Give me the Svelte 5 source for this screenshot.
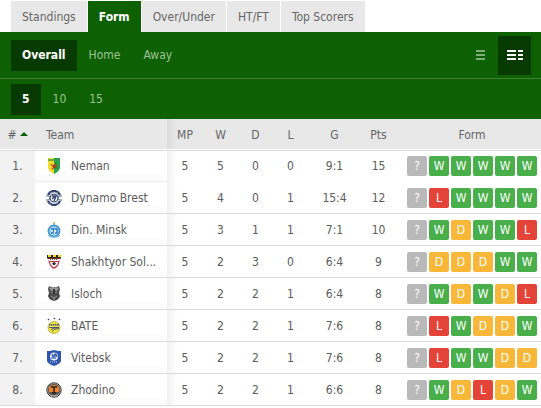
<script>
  const tabs = ['Standings', 'Form', 'Over/Under', 'HT/FT', 'Top Scorers'];
  const venues = ['Overall', 'Home', 'Away'];
  const counts = ['5', '10', '15'];
  let tab = $state('Form');
  let venue = $state('Overall');
  let count = $state('5');
  let wide = $state(true);

  const rows = [
    { team: 'Neman', stats: ['5', '5', '0', '0', '9:1', '15'], form: '?WWWWW' },
    { team: 'Dynamo Brest', stats: ['5', '4', '0', '1', '15:4', '12'], form: '?LWWWW' },
    { team: 'Din. Minsk', stats: ['5', '3', '1', '1', '7:1', '10'], form: '?WDWWL' },
    { team: 'Shakhtyor Sol...', stats: ['5', '2', '3', '0', '6:4', '9'], form: '?DDDWW' },
    { team: 'Isloch', stats: ['5', '2', '2', '1', '6:4', '8'], form: '?WDWDL' },
    { team: 'BATE', stats: ['5', '2', '2', '1', '7:6', '8'], form: '?LWDDW' },
    { team: 'Vitebsk', stats: ['5', '2', '2', '1', '7:6', '8'], form: '?LWWDD' },
    { team: 'Zhodino', stats: ['5', '2', '2', '1', '6:6', '8'], form: '?WDLDW' }
  ];
  const kinds = { '?': 'next', W: 'win', D: 'draw', L: 'loss' };
</script>

{#snippet crest(i)}
  <svg class="crest" viewBox="0 0 16 16" width="16" height="16" aria-hidden="true">
    {#if i === 0}
      <path d="M2 0h6v16Q2 13 2 9z" fill="#f3dc2c" />
      <path d="M8 0h6v9q0 4-6 7z" fill="#20a34c" />
      <path d="M2 1h12v2H2z" fill="#3f9a45" opacity=".75" />
      <path d="M4 6l4 1 2-2 1 2-1 2 2 2-3-1-4 2 2-3z" fill="#a5461c" />
    {:else if i === 1}
      <circle cx="8" cy="8" r="4" fill="#fff" stroke="#34466f" />
      <path d="M2 5Q4 1 8 1t6 4M2 11q2 4 6 4t6-4" fill="none" stroke="#34466f" stroke-width="2.4" />
      <path d="M4 3l8 0M4 13l8 0" stroke="#a9b4ce" stroke-width=".7" />
      <path d="M0 6h3l1 2-1 2H0M16 6h-3l-1 2 1 2h3" fill="none" stroke="#536489" />
      <path d="M6 6h4L8 11M6 9l3-3" fill="none" stroke="#34466f" stroke-width="1.5" />
    {:else if i === 2}
      <path d="M8 0l1 2H7z" fill="#9dca70" stroke="#9dca70" />
      <circle cx="8" cy="9" r="5.5" fill="#eaf6ff" stroke="#388fd4" stroke-width="1.8" />
      <circle cx="8" cy="9" r="3.4" fill="none" stroke="#74b7e8" />
      <path d="M5 7h3l-1 4H5m4-4h2v4H9" fill="none" stroke="#2379c4" stroke-width="1.3" />
      <path d="M2 13l2 2h8l2-2" fill="none" stroke="#74b7e8" />
    {:else if i === 3}
      <path d="M1 1h14l-2 8q-1 4-5 6-4-2-5-6z" fill="#c93542" />
      <path d="M1 1h14v3.500H1z" fill="#292622" />
      <path d="M2 1h3v2H2zm5 0h3v2H7zm5 0h3v2h-3z" fill="#f5d428" />
      <path d="M2 5h12l-1 2H3zM4 8h8l-1 3-3 2.500-3-2.500z" fill="#fff" />
      <path d="M4 5.500h8" stroke="#666" stroke-dasharray="1 1" />
      <path d="M8 8l2 1-1 2H7L6 9z" fill="#333" />
    {:else if i === 4}
      <path d="M3 0l2 1h6l2-1 1 3-1 4 1 3q-1 4-6 5-5-1-6-5l1-3-1-4z" fill="#4a4a4a" />
      <path d="M3 2q5-2 10 0l-2 3H5z" fill="#969696" />
      <path d="M5 6l2 1m2 0l2-1M5 10l3 2 3-2M7 13h2" fill="none" stroke="#999" />
      <path d="M8 3v5" stroke="#303030" stroke-width="2" />
    {:else if i === 5}
      <path d="M2 1h1v1H2zm6-1h1v1H8zm5 1h1v1h-1z" fill="#2c3a96" stroke="#2c3a96" stroke-width=".5" />
      <circle cx="8" cy="9.5" r="6" fill="#f5e42e" stroke="#a8a348" stroke-width=".8" />
      <path d="M3 6h10v1.500H3z" fill="#4656a0" />
      <path d="M3 9.500h10M5 11.500q3-2 8-2M6 13.500q2-3 7-3" fill="none" stroke="#3a4a94" stroke-width=".9" />
      <path d="M4 6.800h8" stroke="#f5e42e" stroke-width=".8" stroke-dasharray="1 1" />
    {:else if i === 6}
      <path d="M1 1l3 0 4-1 4 1h3v10q-1 3-7 5-6-2-7-5z" fill="#2e55ae" />
      <circle cx="8" cy="6.5" r="4" fill="#e8f0ff" />
      <path d="M6 4l1 3 2-3v5M5 8h3M10 4l1 3" fill="none" stroke="#2e55ae" stroke-width="1.2" />
      <path d="M4 12h8" stroke="#d2def5" stroke-dasharray="1 1" />
    {:else}
      <circle cx="8" cy="8" r="7.2" fill="#5b5652" stroke="#393634" />
      <circle cx="8" cy="8" r="6.400" fill="none" stroke="#d6d0ca" stroke-dasharray="1 1" />
      <path d="M3 5q5-4 10 0v5H3z" fill="#ee812b" />
      <path d="M5 5h6M8 5v6M6 11h4" stroke="#252322" stroke-width="1.5" />
      <path d="M4 13q4 2 8 0" fill="none" stroke="#b8b3ae" />
    {/if}
  </svg>
{/snippet}

<main>
  <nav class="tabs" aria-label="Table type">
    {#each tabs as t}
      <button class:active={tab === t} onclick={() => (tab = t)}>{t}</button>
    {/each}
  </nav>

  <div class="filters">
    <div class="bar venues">
      {#each venues as v}
        <button class:active={venue === v} onclick={() => (venue = v)}>{v}</button>
      {/each}
      <div class="views">
        <button class:active={!wide} aria-label="Compact view" onclick={() => (wide = false)}>
          <svg width="9" height="12" viewBox="0 0 9 12"><path d="M0 1h9v2H0zM0 5h9v2H0zM0 9h9v2H0z" fill="currentColor" opacity=".8" /></svg>
        </button>
        <button class:active={wide} aria-label="Full view" onclick={() => (wide = true)}>
          <svg width="16" height="12" viewBox="0 0 16 12"><path d="M0 1h9v2H0zM0 5h9v2H0zM0 9h9v2H0zM11 1h5v2h-5zM11 5h5v2h-5zM11 9h5v2h-5z" fill="currentColor" /></svg>
        </button>
      </div>
    </div>
    <div class="bar counts">
      {#each counts as c}
        <button class:active={count === c} onclick={() => (count = c)}>{c}</button>
      {/each}
    </div>
  </div>

  <table>
    <colgroup>
      <col class="c-rank" /><col /><col class="c-mp" /><col class="c-n" /><col class="c-n" /><col class="c-n" />
      <col class="c-goals" /><col class="c-n" /><col class="c-form" />
    </colgroup>
    <thead>
      <tr>
        <th class="rank" aria-sort="ascending">#<svg class="sort" width="8" height="4" viewBox="0 0 8 4" aria-hidden="true"><path d="M4 0l4 4H0z" fill="#0b6003" /></svg></th>
        <th class="team">Team</th>
        <th class="mp">MP</th>
        <th>W</th>
        <th>D</th>
        <th>L</th>
        <th>G</th>
        <th>Pts</th>
        <th class="form">Form</th>
      </tr>
    </thead>
    <tbody>
      {#each rows as row, i}
        <tr>
          <td class="rank">{i + 1}.</td>
          <td class="team">
            <div class="club">{@render crest(i)}<span>{row.team}</span></div>
          </td>
          {#each row.stats as s, j}
            <td class:mp={j === 0}>{s}</td>
          {/each}
          <td class="form">
            <div class="badges">
              {#each row.form.split('') as f}
                <span class="badge {kinds[f]}">{f}</span>
              {/each}
            </div>
          </td>
        </tr>
      {/each}
    </tbody>
  </table>
</main>

<style>
  main {
    font: 12px/16px Tahoma, 'DejaVu Sans Condensed', 'Noto Sans', sans-serif;
    color: #5c5c5c;
    background: #fff;
  }
  button {
    border: 0;
    margin: 0;
    font: inherit;
    cursor: pointer;
  }
  .tabs {
    display: flex;
    gap: 1px;
    padding: 1px 11px 0;
  }
  .tabs button {
    height: 31px;
    padding: 0 11px;
    background: #e8e8e8;
    color: #666;
  }
  .tabs button.active {
    background: #0d6103;
    color: #fff;
    font-weight: 700;
  }
  .filters {
    background: #0d6103;
  }
  .bar {
    display: flex;
    align-items: center;
    padding: 0 10px 0 11px;
  }
  .venues {
    height: 46px;
    border-bottom: 1px solid #3f8137;
  }
  .counts {
    height: 40px;
  }
  .bar button {
    height: 31px;
    padding: 0 11px;
    background: none;
    color: #9cc398;
  }
  .bar > button {
    margin-right: 1px;
  }
  .bar button.active {
    background: #073a01;
    color: #fff;
    font-weight: 700;
  }
  .views {
    display: flex;
    margin-left: auto;
  }
  .views button {
    display: flex;
    align-items: center;
    height: 39px;
    padding: 0 8px 0 9px;
  }
  .views button:first-child {
    padding: 0 13px;
  }
  table {
    width: 100%;
    table-layout: fixed;
    border-collapse: separate;
    border-spacing: 0;
  }
  .c-rank,
  .c-n {
    width: 35px;
  }
  .c-mp {
    width: 36px;
  }
  .c-goals {
    width: 53px;
  }
  .c-form {
    width: 145px;
  }
  th,
  td {
    box-sizing: border-box;
    height: 32px;
    padding: 0;
    text-align: center;
    font-weight: 400;
    border-bottom: 1px solid #dcdcdc;
  }
  th {
    color: #666;
    background: #e8e8e8;
    background-clip: padding-box;
    box-shadow: inset 0 -1px #fff;
  }
  tbody tr:first-child td {
    height: 31px;
    border-bottom-color: transparent;
  }
  tbody tr:first-child td.team {
    border-bottom-color: #eee;
  }
  .rank {
    white-space: nowrap;
  }
  td.rank {
    background: #f2f2f2;
  }
  .sort {
    margin-left: 3px;
    vertical-align: 3px;
  }
  .team {
    text-align: left;
    padding: 0 11px;
  }
  td.team {
    background: linear-gradient(#fff 70%, #fafafa);
  }
  th.mp {
    background: linear-gradient(90deg, #dcdcdc, #e8e8e8 10px);
    background-clip: padding-box;
  }
  td.mp {
    background: linear-gradient(90deg, #f1f1f1, #fff 10px);
  }
  .club {
    display: flex;
    align-items: center;
    gap: 9px;
    white-space: nowrap;
  }
  .crest {
    flex: none;
  }
  .form {
    padding: 0 4px 0 11px;
  }
  .badges {
    display: flex;
    justify-content: flex-end;
    gap: 2px;
  }
  .badge {
    width: 20px;
    height: 20px;
    line-height: 20px;
    border-radius: 2px;
    color: #fff;
  }
  .next {
    background: #b9b9b9;
  }
  .win {
    background: #48af4a;
  }
  .draw {
    background: #f8b739;
  }
  .loss {
    background: #e44338;
  }
</style>
